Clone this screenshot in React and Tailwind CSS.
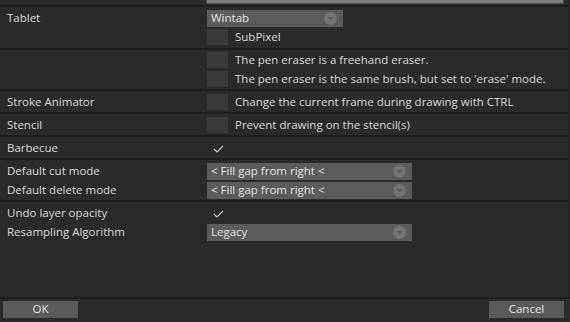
import React from "react";

const font = { fontFamily: '"Open Sans", "Noto Sans", sans-serif' };

const Arrow = () => (
  <svg width="13" height="13" viewBox="0 0 13 13" className="shrink-0">
    <circle cx="6.5" cy="6.5" r="6.5" fill="#737373" />
    <path d="M3.5 5 L9.5 5 L6.5 8.5 Z" fill="#5a5a5a" />
  </svg>
);

const Dropdown = ({ value, width }) => (
  <div
    className={`flex items-center justify-between h-[17px] bg-[#5b5b5b] pl-[4px] pr-[6px] text-[#e4e4e4] ${width}`}
  >
    <span className="pb-[2px]">{value}</span>
    <Arrow />
  </div>
);

const Check = () => (
  <svg width="11" height="8" viewBox="0 0 11 8" className="ml-[6px]">
    <polyline points="1,4 4,7 10,1" fill="none" stroke="#cfcfcf" strokeWidth="1.1" />
  </svg>
);

const CheckBox = ({ label }) => (
  <div className="flex h-[17px]">
    <div className="w-[21px] h-[16px] bg-[#3a3a3a] shrink-0" />
    <span className="ml-[7px] h-[17px] pb-[2px] flex items-center">{label}</span>
  </div>
);

const Sep = () => <div className="h-[2px] bg-[#1e1e1e]" />;

const Row = ({ label, children, className = "" }) => (
  <div className={`flex ${className}`}>
    <div className="w-[207px] shrink-0 pl-[7px] h-[17px] pb-[2px] flex items-center">{label}</div>
    <div className="flex flex-col gap-[2px]">{children}</div>
  </div>
);

export default function App() {
  return (
    <div
      className="w-[570px] h-[322px] bg-[#2a2a2a] text-[#dadada] text-[11.5px] flex flex-col overflow-hidden"
      style={font}
    >
      <div className="flex-1 flex flex-col border-r-2 border-[#232323]">
        <div className="flex h-[5px]">
          <div className="w-[206px]" />
          <div className="w-[358px] h-[4px] bg-[#7b7b7b] border border-t-0 border-[#4c4c4c]" />
        </div>
        <Sep />
        <Row label="Tablet" className="pt-[3px] pb-[2px]">
          <Dropdown value="Wintab" width="w-[136px]" />
          <CheckBox label="SubPixel" />
        </Row>
        <Sep />
        <Row label="" className="pt-[2px] pb-[1px]">
          <CheckBox label="The pen eraser is a freehand eraser." />
          <CheckBox label="The pen eraser is the same brush, but set to 'erase' mode." />
        </Row>
        <Sep />
        <Row label="Stroke Animator" className="pt-[3px] pb-[1px]">
          <CheckBox label="Change the current frame during drawing with CTRL" />
        </Row>
        <Sep />
        <Row label="Stencil" className="pt-[3px] pb-[1px]">
          <CheckBox label="Prevent drawing on the stencil(s)" />
        </Row>
        <Sep />
        <Row label="Barbecue" className="pt-[3px] pb-[1px]">
          <div className="h-[17px] flex items-center">
            <Check />
          </div>
        </Row>
        <Sep />
        <div className="flex flex-col gap-[2px] pt-[3px] pb-[1px]">
          <Row label="Default cut mode">
            <Dropdown value="< Fill gap from right <" width="w-[205px]" />
          </Row>
          <Row label="Default delete mode">
            <Dropdown value="< Fill gap from right <" width="w-[205px]" />
          </Row>
        </div>
        <Sep />
        <div className="flex flex-col gap-[2px] pt-[3px]">
          <Row label="Undo layer opacity">
            <div className="h-[17px] flex items-center">
              <Check />
            </div>
          </Row>
          <Row label="Resampling Algorithm">
            <Dropdown value="Legacy" width="w-[205px]" />
          </Row>
        </div>
      </div>
      <div className="h-[2px] bg-[#1e1e1e]" />
      <div className="h-[23px] flex items-start justify-between px-[3px] pt-[2px]">
        <button className="w-[75px] h-[17px] pb-[1px] bg-[#5a5a5a] text-[#e6e6e6] flex items-center justify-center">
          OK
        </button>
        <button className="w-[75px] h-[17px] pb-[1px] bg-[#5a5a5a] text-[#e6e6e6] flex items-center justify-center mr-[3px]">
          Cancel
        </button>
      </div>
    </div>
  );
}
